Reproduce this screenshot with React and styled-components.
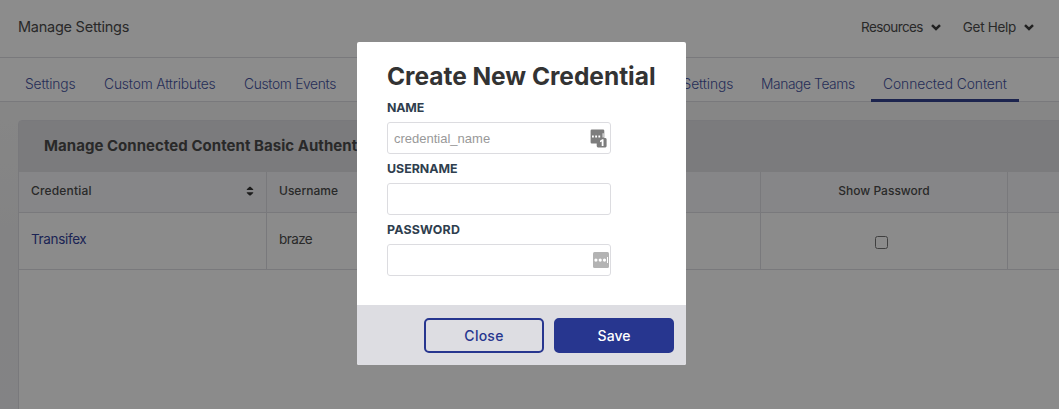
import React from "react";
import styled, { createGlobalStyle } from "styled-components";

const Global = createGlobalStyle`
  * { box-sizing: border-box; }
  html, body { margin: 0; height: 409px; overflow: hidden; }
  body { font-family: Inter, "Liberation Sans", sans-serif; background: #f1f1f2; color: #4c4c4c; }
`;

const Page = styled.div`
  position: relative;
  width: 1059px;
  height: 409px;
  overflow: hidden;
  background: linear-gradient(#f4f4f4 120px, #eeeef0 250px, #eeeef2);
`;

const Header = styled.header`
  height: 58px;
  display: flex;
  align-items: center;
  padding: 0 25px 3px 18px;
  background: #fff;
  border-bottom: 1px solid #dcdce2;
`;

const PageTitle = styled.h1`
  margin: 0 0 1px;
  flex: 1;
  font-size: 14.5px;
  font-weight: 400;
  letter-spacing: -0.25px;
`;

const HelpLink = styled.a`
  display: flex;
  align-items: center;
  gap: 8px;
  margin-left: 22px;
  font-size: 13.5px;
  letter-spacing: ${(p) => p.$spacing}px;
`;

const Tabs = styled.nav`
  height: 44px;
  display: flex;
  align-items: stretch;
  padding-left: 13px;
  background: #fff;
  border-bottom: 1px solid #dcdce2;
`;

const Tab = styled.a`
  flex: none;
  width: ${(p) => p.$width}px;
  height: 44px;
  margin-right: 4px;
  margin-left: ${(p) => p.$offset || 0}px;
  padding: 9px 0 0 12px;
  white-space: nowrap;
  font-size: 13.8px;
  line-height: 35px;
  font-weight: 300;
  color: #46539f;
  letter-spacing: ${(p) => p.$spacing || 0}px;
  box-shadow: inset 0 -3px ${(p) => (p.$active ? "#33428f" : "transparent")};
`;

const Card = styled.section`
  margin: 18px 0 0 18px;
  width: 1260px;
  height: 320px;
  background: #fefefe;
  border: 1px solid #dcdce2;
  border-radius: 4px 0 0 0;
`;

const CardTitle = styled.h2`
  margin: 0;
  height: 51px;
  padding-left: 25px;
  line-height: 50px;
  font-size: 15px;
  font-weight: 700;
  letter-spacing: 0.04px;
  background: #e0e0e3;
`;

const Row = styled.div`
  display: grid;
  grid-template-columns: 248px repeat(4, 247px);
  height: ${(p) => (p.$head ? 41 : 57)}px;
  background: ${(p) => (p.$head ? "#f4f4f7" : "#fefefe")};
  border-bottom: 1px solid #dcdce2;
  width: 1258px;
`;

const Cell = styled.div`
  display: flex;
  align-items: flex-start;
  justify-content: ${(p) => (p.$center ? "center" : "space-between")};
  padding: ${(p) => p.$top}px 12px 0;
  border-right: 1px solid #dcdce2;
  line-height: 18px;
  font-size: ${(p) => (p.$head ? 12 : 13.5)}px;
  font-weight: ${(p) => (p.$head ? 500 : 400)};
  letter-spacing: ${(p) => p.$spacing || 0}px;
`;

const CredentialLink = styled.a`
  color: #33429a;
`;

const Checkbox = styled.span`
  width: 13px;
  height: 13px;
  margin: 6px 5px 0 0;
  border: 1px solid #767676;
  border-radius: 2.5px;
`;

const Overlay = styled.div`
  position: absolute;
  inset: 0;
  display: flex;
  align-items: flex-start;
  padding: 42px 0 0 357px;
  background: rgba(0, 0, 0, 0.45);
`;

const Modal = styled.form`
  width: 329px;
  height: 323px;
  display: flex;
  flex-direction: column;
  border-radius: 2px;
  overflow: hidden;
  background: #fff;
`;

const ModalBody = styled.div`
  height: 263px;
  padding: 19px 30px 0;
`;

const ModalTitle = styled.h2`
  margin: 0;
  height: 31px;
  line-height: 31px;
  font-size: 24.5px;
  font-weight: 700;
  white-space: nowrap;
  color: #333;
  letter-spacing: -0.03px;
`;

const Field = styled.label`
  display: block;
  height: 61px;
`;

const FieldLabel = styled.span`
  display: block;
  height: 30px;
  line-height: 31px;
  font-size: 12.4px;
  font-weight: 700;
  color: #2f3e4e;
  letter-spacing: ${(p) => p.$spacing}px;
`;

const InputBox = styled.span`
  display: flex;
  align-items: center;
  justify-content: space-between;
  width: 224px;
  height: 32px;
  padding: 0 ${(p) => p.$inset || 1}px 0 6px;
  border: 1px solid #dcdce0;
  border-radius: 3px;
`;

const Input = styled.input`
  flex: 1;
  min-width: 0;
  padding: 0;
  border: 0;
  outline: 0;
  background: transparent;
  font: 13px "Liberation Sans", Arial, sans-serif;
  &::placeholder { color: #999; opacity: 1; }
`;

const Footer = styled.footer`
  height: 60px;
  display: flex;
  justify-content: flex-end;
  gap: 10px;
  padding: 13px 12px 0;
  background: #dddde2;
`;

const Button = styled.button`
  width: 120px;
  height: 35px;
  padding: 0;
  border: 2px solid #27368f;
  border-radius: 5px;
  background: ${(p) => (p.$primary ? "#27368f" : "transparent")};
  color: ${(p) => (p.$primary ? "#fff" : "#27368f")};
  font: 500 14px Inter, "Liberation Sans", sans-serif;
  letter-spacing: ${(p) => (p.$primary ? 0 : 0.25)}px;
`;

const Caret = () => (
  <svg width="10" height="7" viewBox="0 0 10 7">
    <path d="M1 1.2 5 5 9 1.2" fill="none" stroke="#3c3c3c" strokeWidth="2.5" />
  </svg>
);

const SortIcon = () => (
  <svg width="8" height="18" viewBox="0 0 8 18">
    <path d="M.8 8V7.2L3.5 4.8h1L7.2 7.2V8zM.8 10.2v.8l2.7 2.4h1l2.7-2.4v-.8z" fill="#333" />
  </svg>
);

const KeyBadge = () => (
  <svg width="17" height="19" viewBox="0 0 17 19">
    <path d="M2 .5h11a1.3 1.3 0 0 1 1.3 1.3V9h1.2A1.3 1.3 0 0 1 16.6 10.3v6.8a1.3 1.3 0 0 1-1.3 1.3H8a1.3 1.3 0 0 1-1.3-1.3V14.6H2A1.3 1.3 0 0 1 .6 13.3V1.8A1.3 1.3 0 0 1 2 .5z" fill="#7d7d7d" />
    <path d="M2 6.6h1.8v1.8H2zM5.2 6.6H7v1.8H5.2zM8.4 6.6h1.8v1.8H8.4zM12.6 4.2h1v4.4h-1z" fill="#fff" />
    <path d="M10 11.8 12.2 10.3h1.3v6.6h-1.8v-4.5l-1.7.9z" fill="#fff" />
  </svg>
);

const KeyIcon = () => (
  <svg width="16" height="16" viewBox="0 0 16 16">
    <rect width="16" height="16" rx="1.5" fill="#b3b3b3" />
    <circle cx="2.9" cy="8.1" r="1.6" fill="#fff" />
    <circle cx="7.2" cy="8.1" r="1.6" fill="#fff" />
    <circle cx="11.5" cy="8.1" r="1.6" fill="#fff" />
    <path d="M14 5h1v6h-1z" fill="#fff" />
  </svg>
);

export default function App() {
  return (
    <Page>
      <Global />
      <Header>
        <PageTitle>Manage Settings</PageTitle>
        <HelpLink $spacing={-0.6}>Resources<Caret /></HelpLink>
        <HelpLink $spacing={-0.3}>Get Help<Caret /></HelpLink>
      </Header>
      <Tabs>
        <Tab $width={75} $spacing={-0.1}>Settings</Tab>
        <Tab $width={136} $spacing={-0.16}>Custom Attributes</Tab>
        <Tab $width={117} $spacing={-0.32}>Custom Events</Tab>
        <Tab $width={112} $offset={280} $spacing={-0.1}>Email Settings</Tab>
        <Tab $width={118} $spacing={-0.4}>Manage Teams</Tab>
        <Tab $width={148} $spacing={-0.06} $active>Connected Content</Tab>
      </Tabs>
      <Card>
        <CardTitle>Manage Connected Content Basic Authentication</CardTitle>
        <Row $head>
          <Cell $head $top={10} $spacing={0.17}>Credential<SortIcon /></Cell>
          <Cell $head $top={10}>Username</Cell>
          <Cell $head $top={10} />
          <Cell $head $top={10} $center>Show Password</Cell>
          <Cell $head $top={10} />
        </Row>
        <Row>
          <Cell $top={17} $spacing={-0.35}><CredentialLink>Transifex</CredentialLink></Cell>
          <Cell $top={17} $spacing={-0.6}>braze</Cell>
          <Cell $top={17} />
          <Cell $top={17} $center><Checkbox /></Cell>
          <Cell $top={17} />
        </Row>
      </Card>
      <Overlay>
        <Modal>
          <ModalBody>
            <ModalTitle>Create New Credential</ModalTitle>
            <Field>
              <FieldLabel $spacing={-0.2}>NAME</FieldLabel>
              <InputBox $inset={3}><Input placeholder="credential_name" /><KeyBadge /></InputBox>
            </Field>
            <Field>
              <FieldLabel $spacing={-0.02}>USERNAME</FieldLabel>
              <InputBox><Input /></InputBox>
            </Field>
            <Field>
              <FieldLabel $spacing={0.2}>PASSWORD</FieldLabel>
              <InputBox><Input type="password" /><KeyIcon /></InputBox>
            </Field>
          </ModalBody>
          <Footer>
            <Button type="button">Close</Button>
            <Button type="button" $primary>Save</Button>
          </Footer>
        </Modal>
      </Overlay>
    </Page>
  );
}
